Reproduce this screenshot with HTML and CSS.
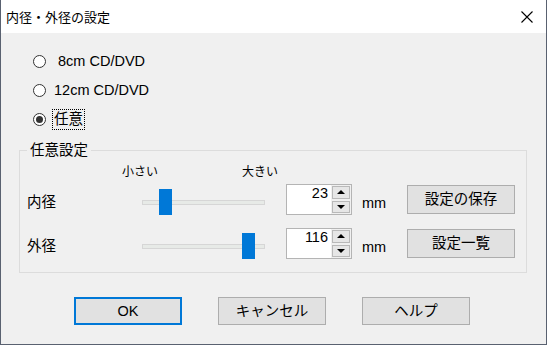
FILE: index.html
```html
<!DOCTYPE html>
<html lang="ja">
<head>
    <meta charset="UTF-8">
    <title>内径・外径の設定</title>
    <link rel="stylesheet" href="styles.css">
</head>
<body>
<div class="window">
    <div class="titlebar">
        <span class="title">内径・外径の設定</span>
        <svg class="close" width="12" height="12" viewBox="0 0 12 12">
            <path d="M0.5 0.5 L11.5 11.5 M11.5 0.5 L0.5 11.5" stroke="#000" stroke-width="1.1" fill="none"/>
        </svg>
    </div>
    <div class="client">
        <div class="radios">
            <label class="radio"><span class="circle"></span><span class="text">&nbsp;8cm CD/DVD</span></label>
            <label class="radio"><span class="circle"></span><span class="text">12cm CD/DVD</span></label>
            <label class="radio checked"><span class="circle"></span><span class="text focus">任意</span></label>
        </div>
        <fieldset class="group">
            <legend>任意設定</legend>
            <div class="scale"><span>小さい</span><span>大きい</span></div>
            <div class="row">
                <span class="label">内径</span>
                <div class="slider"><div class="track"></div><div class="thumb" style="left:17px"></div></div>
                <div class="spin">
                    <span class="value">23</span>
                    <div class="arrows"><span class="up"></span><span class="down"></span></div>
                </div>
                <span class="unit">mm</span>
                <button class="btn">設定の保存</button>
            </div>
            <div class="row second">
                <span class="label">外径</span>
                <div class="slider"><div class="track"></div><div class="thumb" style="left:100px"></div></div>
                <div class="spin">
                    <span class="value">116</span>
                    <div class="arrows"><span class="up"></span><span class="down"></span></div>
                </div>
                <span class="unit">mm</span>
                <button class="btn">設定一覧</button>
            </div>
        </fieldset>
        <div class="actions">
            <button class="btn default">OK</button>
            <button class="btn">キャンセル</button>
            <button class="btn">ヘルプ</button>
        </div>
    </div>
</div>
</body>
</html>
```

FILE: styles.css
```css
html, body {
    margin: 0;
    padding: 0;
}
body {
    font-family: "Liberation Sans", "Noto Sans CJK JP", sans-serif;
    font-size: 14.5px;
    line-height: 17px;
    color: #000;
    background: #f0f0f0;
}
.window {
    width: 547px;
    height: 345px;
    box-sizing: border-box;
    border: 1px solid #596170;
    border-top: none;
    background: #f0f0f0;
}
.titlebar {
    height: 33px;
    background: #fff;
    display: flex;
    align-items: center;
    justify-content: space-between;
    padding: 0 13px 0 5px;
}
.title {
    font-family: "Noto Sans CJK JP", sans-serif;
    font-size: 13px;
    line-height: 16px;
    padding-top: 1px;
}
.close {
    display: block;
    margin-top: 1px;
}
.client {
    padding: 14px 0 0 0;
}

/* ラジオボタン */
.radios {
    padding-left: 32px;
}
.radio {
    display: flex;
    align-items: center;
    height: 29px;
}
.circle {
    width: 13px;
    height: 13px;
    box-sizing: border-box;
    border: 1px solid #333;
    border-radius: 50%;
    background: #fff;
    position: relative;
    flex: none;
}
.radio.checked .circle:after {
    content: "";
    position: absolute;
    left: 2px;
    top: 2px;
    width: 7px;
    height: 7px;
    border-radius: 50%;
    background: #333;
}
.radio .text {
    margin-left: 6px;
    padding: 1px 1px;
    border: 1px solid transparent;
}
.radio .text.focus {
    border: 1px dotted #000;
}

/* グループボックス */
.group {
    margin: 6px 0 0 18px;
    width: 508px;
    box-sizing: border-box;
    padding: 4px 0 13px 0;
    border: 1px solid #dcdcdc;
}
.group legend {
    margin-left: 7px;
    padding: 0 3px;
    line-height: 20px;
}
.scale {
    display: flex;
    gap: 84px;
    padding-left: 102px;
    font-size: 12px;
    line-height: 16px;
    height: 16px;
    margin-bottom: 4px;
}
.row {
    display: flex;
    height: 31px;
}
.row.second {
    margin-top: 13px;
}
.label {
    width: 122px;
    box-sizing: border-box;
    padding-left: 7px;
    margin-top: 10px;
}
.slider {
    position: relative;
    width: 123px;
    height: 31px;
    margin-right: 21px;
}
.track {
    position: absolute;
    left: 0;
    right: 0;
    top: 16px;
    height: 5px;
    box-sizing: border-box;
    background: #e7eae7;
    border: 1px solid #d6d6d6;
}
.thumb {
    position: absolute;
    top: 5px;
    width: 13px;
    height: 26px;
    background: #0078d7;
}
.spin {
    width: 66px;
    height: 31px;
    box-sizing: border-box;
    border: 1px solid #b4b4b4;
    background: #fff;
    display: flex;
}
.spin .value {
    flex: 1;
    text-align: right;
    padding-right: 3px;
}
.arrows {
    width: 20px;
    display: flex;
    flex-direction: column;
    background: #f0f0f0;
}
.arrows span {
    flex: 1;
    margin: 1px;
    border: 1px solid #b9b9b9;
    background: #e6e6e6;
    display: flex;
    align-items: center;
    justify-content: center;
}
.arrows .up:after {
    content: "";
    border-left: 4px solid transparent;
    border-right: 4px solid transparent;
    border-bottom: 4px solid #000;
}
.arrows .down:after {
    content: "";
    border-left: 4px solid transparent;
    border-right: 4px solid transparent;
    border-top: 4px solid #000;
}
.unit {
    width: 55px;
    box-sizing: border-box;
    padding-left: 10px;
    align-self: flex-end;
    margin-bottom: 3px;
}
.btn {
    font: inherit;
    color: #000;
    width: 108px;
    height: 29px;
    margin-top: 1px;
    padding: 0;
    background: #e1e1e1;
    border: 1px solid #adadad;
    box-sizing: border-box;
}
.btn.default {
    border: 2px solid #0078d7;
}

/* 下部ボタン */
.actions {
    display: flex;
    gap: 36px;
    padding-left: 73px;
    margin-top: 24px;
}
.actions .btn {
    height: 28px;
    margin-top: 0;
}
```
